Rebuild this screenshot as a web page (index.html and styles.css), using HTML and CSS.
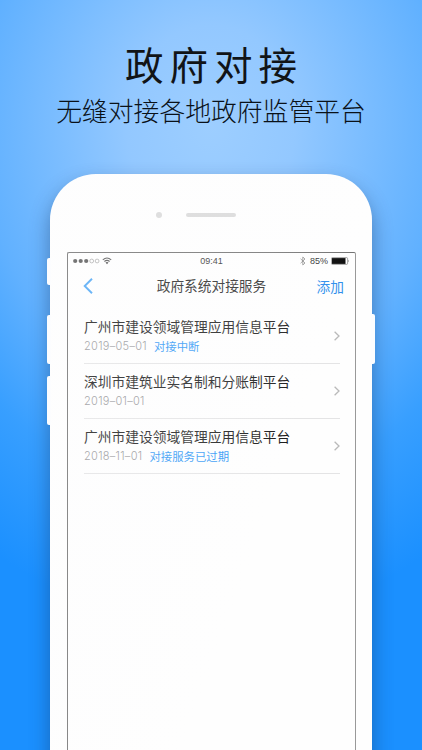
FILE: index.html
```html
<!DOCTYPE html>
<html lang="zh-CN">
<head>
<meta charset="utf-8">
<title>政府对接</title>
<link rel="stylesheet" href="styles.css">
</head>
<body>
<main class="poster">
  <h1 class="headline">政府对接</h1>
  <p class="tagline">无缝对接各地政府监管平台</p>
  <section class="phone">
    <i class="key mute"></i><i class="key vol-up"></i><i class="key vol-down"></i><i class="key power"></i>
    <div class="bezel"><span class="camera"></span><span class="speaker"></span></div>
    <div class="screen">
      <div class="status">
        <div class="signal">
          <svg width="40" height="10" viewBox="0 0 40 10"><g fill="#555"><circle cx="2.2" cy="5" r="2.1"/><circle cx="7.7" cy="5" r="2.1"/><circle cx="13.2" cy="5" r="2.1"/></g><g fill="none" stroke="#888" stroke-width=".6"><circle cx="18.7" cy="5" r="1.9"/><circle cx="24.1" cy="5" r="1.9"/></g><g fill="none" stroke="#555" stroke-width="1.1"><path d="M29.8 3.8Q34 .1 38.2 3.8M31.4 5.5Q34 3.3 36.6 5.5"/></g><path d="M32.5 6.6Q34 5.5 35.5 6.6L34 8.2Z" fill="#444"/></svg>
        </div>
        <span class="clock">09:41</span>
        <div class="power-info">
          <svg width="6" height="10" viewBox="0 0 6 10" fill="none" stroke="#777" stroke-width=".7"><path d="M.6 2.8 5 7 2.8 9V1L5 3 .6 7.2"/></svg>
          <span>85%</span>
          <svg width="19" height="8" viewBox="0 0 19 8"><rect x=".4" y=".6" width="16.2" height="6.8" rx="1" fill="none" stroke="#666" stroke-width=".6"/><rect x="1" y="1.1" width="13.5" height="5.8" fill="#080808"/><path d="M17.3 2.7Q18.6 4 17.3 5.3Z" fill="#555"/></svg>
        </div>
      </div>
      <header class="nav">
        <svg class="back" width="10" height="16" viewBox="0 0 10 16" fill="none" stroke="#4ba5f5" stroke-width="1.9"><path d="M9 .8 1.7 8 9 15.2"/></svg>
        <span class="nav-title">政府系统对接服务</span>
        <span class="add">添加</span>
      </header>
      <ul class="list">
        <li><div><div class="name">广州市建设领域管理应用信息平台</div><div class="meta"><span class="date">2019–05–01</span><span class="state">对接中断</span></div></div><svg class="arrow" viewBox="0 0 6 10"><path d="M.6.7 5 5 .6 9.3"/></svg></li>
        <li><div><div class="name">深圳市建筑业实名制和分账制平台</div><div class="meta"><span class="date">2019–01–01</span></div></div><svg class="arrow" viewBox="0 0 6 10"><path d="M.6.7 5 5 .6 9.3"/></svg></li>
        <li><div><div class="name">广州市建设领域管理应用信息平台</div><div class="meta"><span class="date">2018–11–01</span><span class="state">对接服务已过期</span></div></div><svg class="arrow" viewBox="0 0 6 10"><path d="M.6.7 5 5 .6 9.3"/></svg></li>
      </ul>
    </div>
  </section>
</main>
</body>
</html>
```
FILE: styles.css
```css
* { box-sizing: border-box; }
body { margin: 0; font-family: "Noto Sans CJK SC", sans-serif; }
svg { display: block; flex: none; }
.poster {
  width: 422px;
  height: 750px;
  overflow: hidden;
  background: radial-gradient(ellipse 420px 500px at 211px 125px, #9dceff 0%, #93c8ff 20%, #61b1ff 55%, #389fff 75%, #1b90ff 100%);
}
.headline {
  margin: 0;
  padding: 34px 0 0 6px;
  height: 90px;
  font-size: 38.5px;
  line-height: 58px;
  font-weight: 400;
  letter-spacing: 6px;
  text-align: center;
  color: #111417;
}
.tagline {
  margin: 0;
  height: 84px;
  font-size: 25.8px;
  line-height: 40px;
  font-weight: 300;
  text-align: center;
  color: #0a1118;
}
.phone {
  position: relative;
  width: 322px;
  height: 640px;
  margin-left: 50px;
  padding: 0 17px;
  border-radius: 46px 46px 0 0;
  background: #fefefe;
  box-shadow: 0 10px 20px rgba(20, 55, 100, .48);
}
/* glass reflection falling across the left of the display */
.phone::after {
  content: "";
  position: absolute;
  inset: 0;
  border-radius: inherit;
  pointer-events: none;
  background: linear-gradient(110deg, rgba(252, 252, 253, .2) 0%, rgba(252, 252, 253, .16) 45%, rgba(255, 255, 255, 0) 62%);
}
.key { position: absolute; width: 4px; background: #fcfdff; border-radius: 2px 0 0 2px; left: -3px; }
.mute { top: 84px; height: 27px; }
.vol-up { top: 141px; height: 49px; }
.vol-down { top: 202px; height: 49px; }
.power { left: auto; right: -3px; top: 140px; height: 50px; border-radius: 0 2px 2px 0; }
.bezel { height: 78px; display: flex; align-items: center; padding: 4px 0 0 89px; gap: 24px; }
.camera { width: 6px; height: 6px; border-radius: 50%; background: #d8d8d8; }
.speaker { width: 50px; height: 4px; border-radius: 2px; background: #d8d8d8; }
.screen { height: 570px; width: 289px; border: 1px solid #707070; border-right-color: #999; border-radius: 2px 2px 0 0; }
.status { height: 16px; display: grid; grid-template-columns: 1fr auto 1fr; align-items: center; padding: 0 5px; font: 9px/16px "Liberation Sans", sans-serif; color: #333; }
.power-info { display: flex; justify-content: flex-end; align-items: center; gap: 4px; }
.power-info span { margin-right: -1px; }
.nav { height: 34px; display: grid; grid-template-columns: 1fr auto 1fr; align-items: center; padding: 0 11px 0 15px; font-size: 13.7px; line-height: 20px; color: #262626; }
.nav-title { position: relative; left: -2px; top: -1px; }
.add { text-align: right; color: #2c8dec; }
.list { list-style: none; margin: 6px 15px 0 16px; padding: 0; }
.list li { height: 55px; display: flex; justify-content: space-between; align-items: center; border-bottom: 1px solid #e4e4e5; }
.name { position: relative; top: -1px; font-size: 13.75px; line-height: 20px; color: #1a1a1a; white-space: nowrap; }
.meta { display: flex; height: 18px; gap: 7px; font-size: 11.4px; line-height: 18px; }
.date { font-family: Inter, sans-serif; font-size: 11px; font-weight: 300; letter-spacing: .3px; color: #97979a; }
.state { color: #2f97f5; }
.arrow { width: 6px; height: 10px; fill: none; stroke: #bababa; stroke-width: 1.3; }
```
